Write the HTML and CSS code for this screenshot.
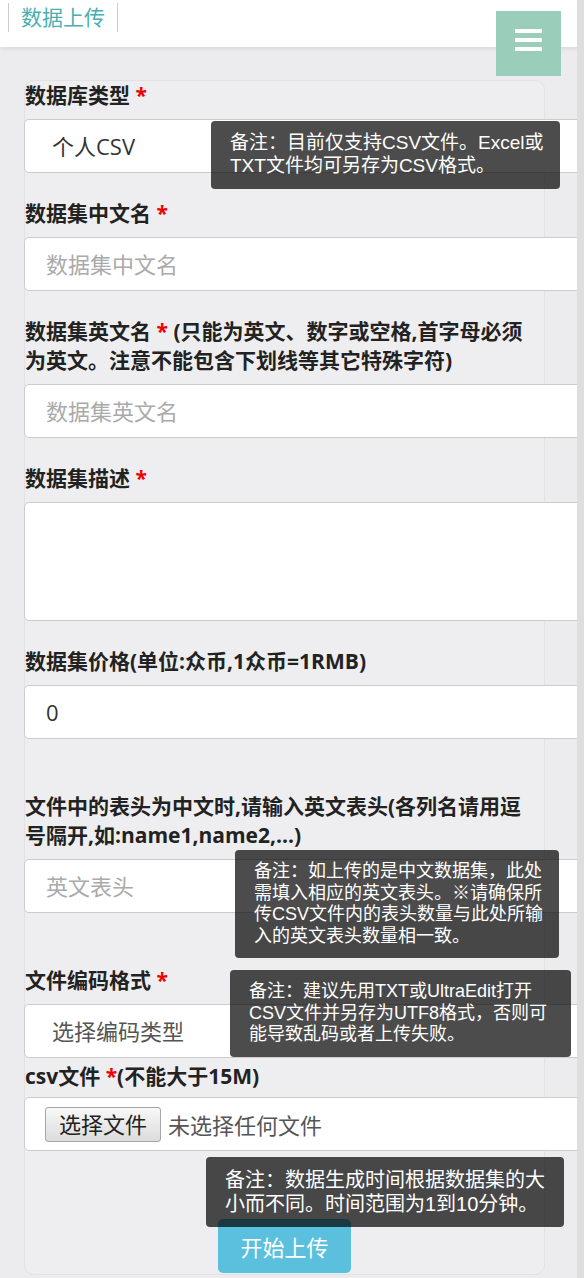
FILE: index.html
```html
<!DOCTYPE html>
<html lang="zh-CN">
<head>
    <meta charset="UTF-8">
    <title>数据上传</title>
    <link rel="stylesheet" href="styles.css">
</head>
<body>
    <div class="page">
        <div class="topbar">
            <span class="page-title">数据上传</span>
            <button class="menu-toggle" type="button"><span></span><span></span><span></span></button>
        </div>

        <div class="upload-panel">
            <form>
                <div class="form-group">
                    <label>数据库类型 <span class="req">*</span></label>
                    <select class="field field-select" name="db_type">
                        <option>个人CSV</option>
                    </select>
                    <div class="note note-type">备注：目前仅支持CSV文件。Excel或<br>TXT文件均可另存为CSV格式。</div>
                </div>

                <div class="form-group">
                    <label>数据集中文名 <span class="req">*</span></label>
                    <input class="field" type="text" name="name_cn" placeholder="数据集中文名">
                </div>

                <div class="form-group">
                    <label>数据集英文名 <span class="req">*</span> (只能为英文、数字或空格,首字母必须为英文。注意不能包含下划线等其它特殊字符)</label>
                    <input class="field" type="text" name="name_en" placeholder="数据集英文名">
                </div>

                <div class="form-group">
                    <label>数据集描述 <span class="req">*</span></label>
                    <textarea class="field" name="description"></textarea>
                </div>

                <div class="form-group">
                    <label>数据集价格(单位:众币,1众币=1RMB)</label>
                    <input class="field" type="text" name="price" value="0">
                </div>

                <div class="form-group spaced">
                    <label>文件中的表头为中文时,请输入英文表头(各列名请用逗号隔开,如:name1,name2,...)</label>
                    <input class="field" type="text" name="header_en" placeholder="英文表头">
                    <div class="note note-header">备注：如上传的是中文数据集，此处<br>需填入相应的英文表头。※请确保所<br>传CSV文件内的表头数量与此处所输<br>入的英文表头数量相一致。</div>
                </div>

                <div class="form-group spaced">
                    <label>文件编码格式 <span class="req">*</span></label>
                    <select class="field field-select empty" name="encoding">
                        <option>选择编码类型</option>
                    </select>
                    <div class="note note-encoding">备注：建议先用TXT或UltraEdit打开<br>CSV文件并另存为UTF8格式，否则可<br>能导致乱码或者上传失败。</div>
                </div>

                <div class="form-group tight">
                    <label class="file-label">csv文件 <span class="req">*</span>(不能大于15M)</label>
                    <div class="field file-field">
                        <span class="file-btn">选择文件</span>
                        <span class="file-name">未选择任何文件</span>
                    </div>
                </div>

                <div class="form-actions">
                    <div class="note note-submit">备注：数据生成时间根据数据集的大<br>小而不同。时间范围为1到10分钟。</div>
                    <button class="btn-upload" type="submit">开始上传</button>
                </div>
            </form>
        </div>
    </div>
</body>
</html>
```

FILE: styles.css
```css
body {
    margin: 0;
    background-color: #dedede;
    font-family: "Open Sans", "Noto Sans CJK SC", sans-serif;
}
.page {
    width: 577px;
    min-height: 1278px;
    background-color: #ececee;
    overflow: hidden;
}
.topbar {
    position: relative;
    z-index: 2;
    height: 47px;
    box-sizing: border-box;
    padding: 3px 0 0 8px;
    background: white;
    box-shadow: 0 2px 4px rgba(0, 0, 0, 0.08);
}
.page-title {
    display: inline-block;
    height: 29px;
    line-height: 29px;
    padding: 0 12px;
    border-left: 1px solid #ccc;
    border-right: 1px solid #ccc;
    color: #4aafb4;
    font-size: 21px;
}
.menu-toggle {
    position: absolute;
    top: 11px;
    right: 16px;
    width: 65px;
    height: 65px;
    padding: 18px 0 0;
    border: none;
    background-color: #9bcdbb;
    display: flex;
    flex-direction: column;
    align-items: center;
    gap: 5px;
}
.menu-toggle span {
    width: 27px;
    height: 4px;
    border-radius: 1px;
    background: white;
}
.upload-panel {
    width: 521px;
    box-sizing: border-box;
    margin: 33px 0 0 24px;
    padding-bottom: 1px;
    background-color: #eeeef0;
    border: 1px solid #e2e2e5;
    border-radius: 10px;
}
.form-group {
    position: relative;
    margin-top: 26px;
}
.form-group:first-child {
    margin-top: 0;
}
.form-group.spaced {
    margin-top: 53px;
}
.form-group.tight {
    margin-top: 4px;
}
label {
    display: block;
    width: 510px;
    margin-bottom: 9px;
    color: #222;
    font-size: 21px;
    font-weight: 700;
    line-height: 29px;
}
.file-label {
    margin-bottom: 6px;
}
.req {
    color: #e00;
}
.field {
    display: block;
    width: 570px;
    height: 54px;
    margin-left: -1px;
    box-sizing: border-box;
    padding: 0 21px;
    border: 1px solid #ccc;
    border-radius: 5px;
    background: white;
    color: #333;
    font-family: inherit;
    font-size: 22px;
    outline: none;
}
.field::placeholder {
    color: #aaa;
}
.field-select {
    appearance: none;
    padding-left: 27px;
}
.field-select.empty {
    color: #555;
}
textarea.field {
    height: 119px;
    resize: none;
}
.file-field {
    display: flex;
    align-items: center;
    padding-left: 20px;
}
.file-btn {
    height: 35px;
    box-sizing: border-box;
    padding: 0 13px;
    border: 1px solid #a6a6a6;
    border-radius: 3px;
    background: linear-gradient(#f8f8f8, #dcdcdc);
    color: #222;
    line-height: 33px;
}
.file-name {
    margin-left: 7px;
    color: #555;
}
.form-actions {
    position: relative;
    margin-top: 68px;
    text-align: center;
}
.btn-upload {
    height: 54px;
    padding: 0 22px;
    border: none;
    border-radius: 5px;
    background-color: #5bc0de;
    color: white;
    font-family: inherit;
    font-size: 22px;
}
.note {
    position: absolute;
    z-index: 3;
    box-sizing: border-box;
    padding: 11px 19px;
    border-radius: 4px;
    background: rgba(0, 0, 0, 0.7);
    color: white;
    font-family: "Liberation Sans", "Noto Sans CJK SC", sans-serif;
    line-height: 1.2;
    text-align: left;
    white-space: nowrap;
}
.note-type {
    top: 40px;
    left: 186px;
    width: 349px;
    font-size: 19px;
}
.note-header {
    top: 58px;
    left: 210px;
    width: 324px;
    font-size: 18px;
}
.note-encoding {
    top: 4px;
    left: 205px;
    width: 341px;
    font-size: 18px;
}
.note-submit {
    top: -62px;
    left: 181px;
    width: 358px;
    font-size: 20px;
}
```
